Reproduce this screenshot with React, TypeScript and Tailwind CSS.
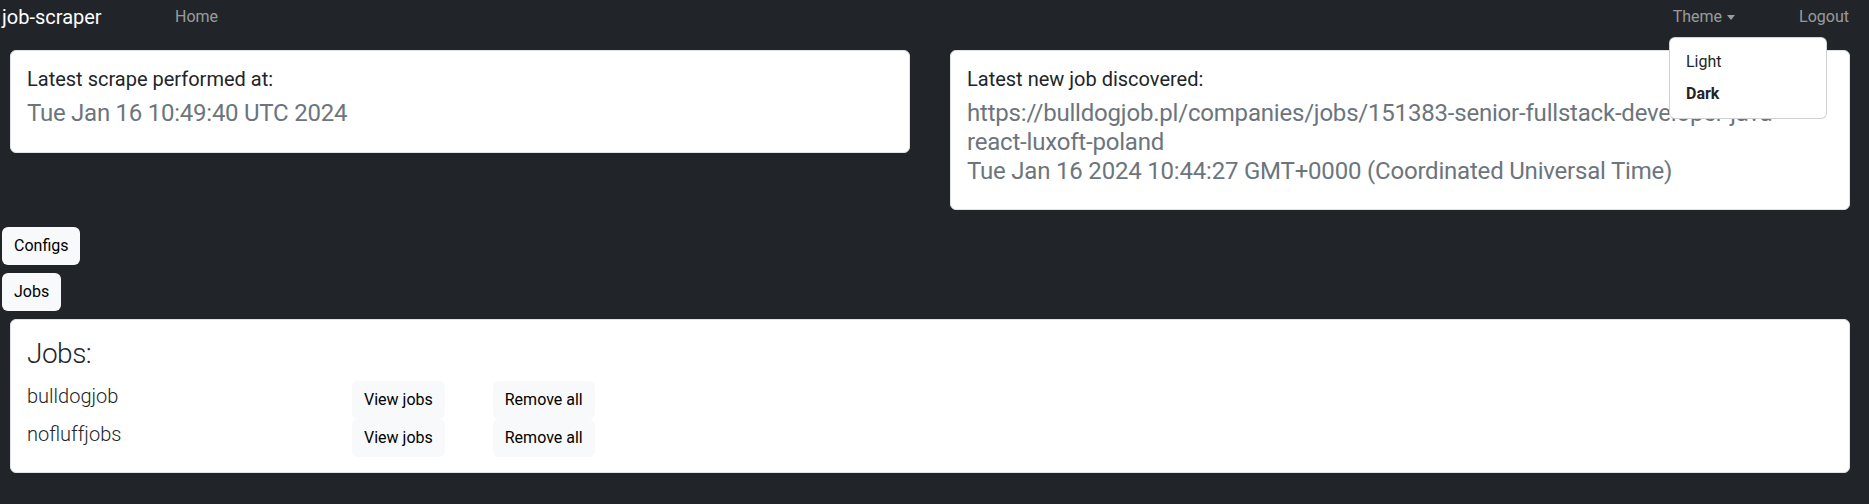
import React from "react";

const font = { fontFamily: 'Roboto, "Noto Sans", "Liberation Sans", sans-serif' };

function Btn({ children }: { children: React.ReactNode }) {
  return (
    <button className="flex h-[38px] items-center justify-center rounded-[6px] bg-[#f8f9fa] px-[12px] text-[16px] leading-[24px] text-black">
      {children}
    </button>
  );
}

export default function App() {
  return (
    <div className="relative min-h-screen bg-[#212529] text-[#212529]" style={font}>
      {/* Navbar */}
      <nav className="flex h-[33px] items-center">
        <div className="w-[175px] pl-[2px] text-[20px] leading-[30px] text-white">job-scraper</div>
        <a className="text-[16px] leading-[24px] text-[rgba(255,255,255,0.55)]">Home</a>
        <div className="ml-auto flex items-center pr-[20px]">
          <a className="flex items-center text-[16px] leading-[24px] text-[rgba(255,255,255,0.55)]">
            Theme
            <span className="ml-[5px] mt-[1px] h-0 w-0 border-x-[4.5px] border-t-[5px] border-x-transparent border-t-[rgba(255,255,255,0.55)]" />
          </a>
          <a className="ml-[64px] text-[16px] leading-[24px] text-[rgba(255,255,255,0.55)]">Logout</a>
        </div>
      </nav>

      {/* Dropdown menu */}
      <div className="absolute right-[42px] top-[37px] z-10 w-[158px] rounded-[6px] border border-[rgba(0,0,0,0.175)] bg-white py-[8px]">
        <div className="px-[16px] py-[4px] text-[16px] leading-[24px] text-[#212529]">Light</div>
        <div className="px-[16px] py-[4px] text-[16px] font-bold leading-[24px] text-[#212529]">Dark</div>
      </div>

      {/* Top cards */}
      <div className="mt-[17px] flex items-start gap-[40px] pl-[10px]">
        <div className="w-[900px] rounded-[6px] border border-[#dee2e6] bg-white px-[16px] pt-[16px] pb-[16px]">
          <div className="mb-[8px] text-[20px] font-normal leading-[24px]">Latest scrape performed at:</div>
          <div className="mb-[8px] text-[24px] leading-[29px] tracking-[-0.25px] text-[#6c757d]">Tue Jan 16 10:49:40 UTC 2024</div>
        </div>
        <div className="w-[900px] rounded-[6px] border border-[#dee2e6] bg-white px-[16px] pt-[16px] pb-[15px]">
          <div className="mb-[8px] text-[20px] font-normal leading-[24px]">Latest new job discovered:</div>
          <div className="mb-[8px] text-[24px] leading-[29px] tracking-[-0.2px] text-[#6c757d]">
            <span className="whitespace-nowrap">https://bulldogjob.pl/companies/jobs/151383-senior-fullstack-developer-java-</span>
            <br />
            react-luxoft-poland
            <br />
            Tue Jan 16 2024 10:44:27 GMT+0000 (Coordinated Universal Time)
          </div>
        </div>
      </div>

      {/* Section buttons */}
      <div className="ml-[2px] mt-[17px] flex flex-col items-start gap-[8px]">
        <Btn>Configs</Btn>
        <Btn>Jobs</Btn>
      </div>

      {/* Jobs card */}
      <div className="ml-[10px] mt-[8px] w-[1840px] rounded-[6px] border border-[#dee2e6] bg-white px-[16px] pt-[16px] pb-[15px]">
        <div className="mb-[9px] text-[28px] font-light leading-[36px] tracking-[-0.5px]">Jobs:</div>
        {["bulldogjob", "nofluffjobs"].map((name) => (
          <div key={name} className="flex items-start">
            <div className="w-[325px] text-[20px] font-light leading-[30px]">{name}</div>
            <Btn>View jobs</Btn>
            <div className="w-[48px]" />
            <Btn>Remove all</Btn>
          </div>
        ))}
      </div>
    </div>
  );
}
